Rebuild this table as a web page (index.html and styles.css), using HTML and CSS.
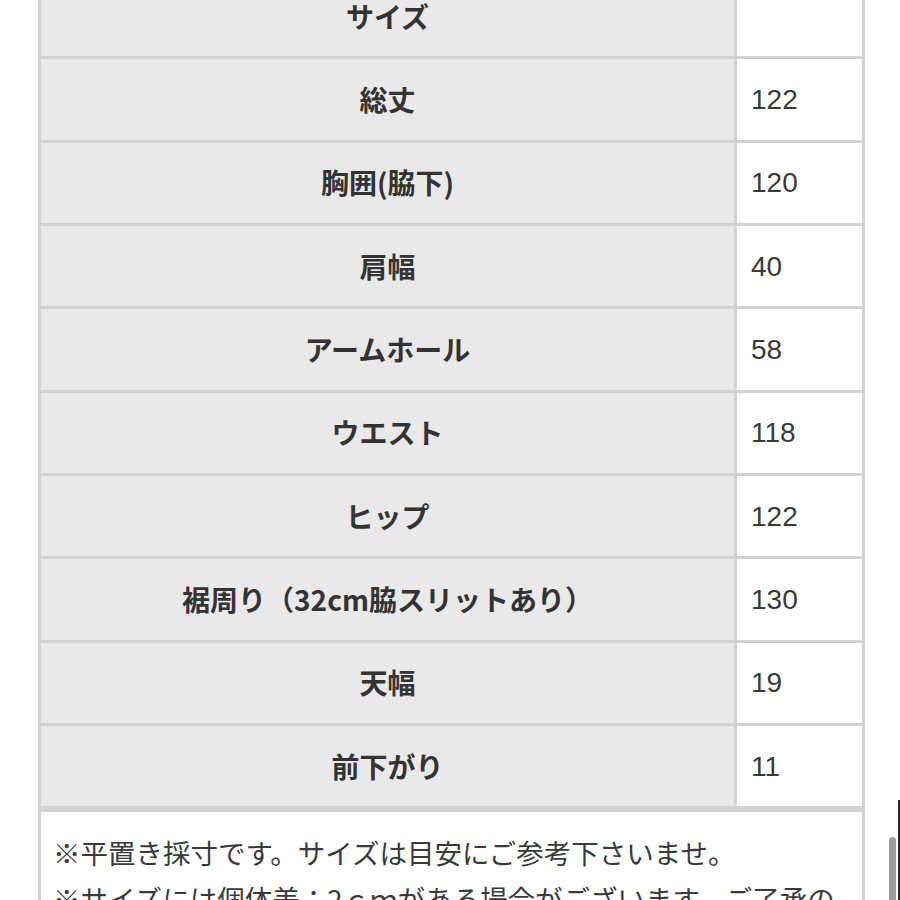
FILE: index.html
```html
<!DOCTYPE html>
<html lang="ja">
<head>
<meta charset="utf-8">
<link rel="stylesheet" href="styles.css">
</head>
<body>
<div class="page">
  <div class="size-table">
    <div class="label">サイズ</div><div class="value"></div>
    <div class="label">総丈</div><div class="value">122</div>
    <div class="label">胸囲(脇下)</div><div class="value">120</div>
    <div class="label">肩幅</div><div class="value">40</div>
    <div class="label">アームホール</div><div class="value">58</div>
    <div class="label">ウエスト</div><div class="value">118</div>
    <div class="label">ヒップ</div><div class="value">122</div>
    <div class="label">裾周り（32cm脇スリットあり）</div><div class="value">130</div>
    <div class="label">天幅</div><div class="value">19</div>
    <div class="label">前下がり</div><div class="value">11</div>
  </div>
  <div class="note">
    <p>※平置き採寸です。サイズは目安にご参考下さいませ。</p>
    <p>※サイズには個体差：2ｃｍがある場合がございます。ご了承の</p>
  </div>
</div>
<div class="scrollbar"><div class="thumb"></div></div>
</body>
</html>
```

FILE: styles.css
```css
html, body {
  margin: 0;
  padding: 0;
  background: #ffffff;
  overflow: hidden;
  height: 900px;
}
body {
  font-family: "Noto Sans CJK JP", "Noto Sans", sans-serif;
  color: #333333;
}
.page {
  margin-top: -27px;
  margin-left: 38px;
  width: 827px;
}
.size-table {
  display: grid;
  grid-template-columns: 693px 125px;
  grid-auto-rows: 80.33px;
  gap: 3px;
  padding: 3px;
  background: #d2d2d2;
}
.label {
  background: #e9e9e9;
  display: flex;
  align-items: center;
  justify-content: center;
  font-weight: 700;
  font-size: 28px;
  color: #333333;
  padding-bottom: 1px;
}
.value {
  background: #ffffff;
  display: flex;
  align-items: center;
  padding-left: 14px;
  padding-top: 1px;
  font-family: "Liberation Sans", "Noto Sans", sans-serif;
  font-size: 28px;
  color: #3a3a3a;
}
.note {
  background: #ffffff;
  border: 3px solid #d2d2d2;
  border-bottom: none;
  padding: 17px 10px 0 12px;
  font-size: 27.5px;
  line-height: 46px;
  color: #3a3a3a;
}
.note p {
  margin: 0;
  white-space: nowrap;
}
.scrollbar {
  position: fixed;
  top: 0;
  right: 0;
  width: 14px;
  height: 900px;
}
.thumb {
  position: absolute;
  left: 3px;
  top: 837px;
  width: 7px;
  height: 80px;
  border-radius: 4px;
  background: #9c9c9c;
}
.scrollbar::after {
  content: "";
  position: absolute;
  right: 0;
  top: 800px;
  width: 2px;
  height: 100px;
  background: #2a2a2a;
}
```
